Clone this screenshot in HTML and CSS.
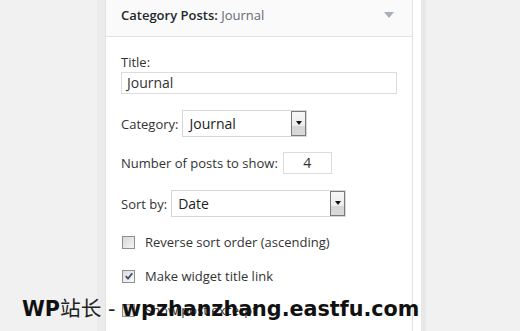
FILE: index.html
```html
<!DOCTYPE html>
<html>
<head>
<meta charset="utf-8">
<link rel="stylesheet" href="styles.css">
</head>
<body>
<div class="page">
  <div class="gutter-left"></div>
  <div class="widget">
    <div class="widget-top">
      <h3 class="widget-title">Category Posts: <span class="in-title">Journal</span></h3>
      <span class="toggle"></span>
    </div>
    <div class="widget-inside">
      <div class="field">
        <label class="lbl">Title:</label>
        <div class="text-input wide">Journal</div>
      </div>
      <div class="row row-cat">
        <label class="lbl">Category:</label>
        <div class="select sel-cat"><span class="sel-val">Journal</span><span class="sel-btn"><span class="tri"></span></span></div>
      </div>
      <div class="row row-num">
        <label class="lbl">Number of posts to show:</label>
        <div class="text-input num">4</div>
      </div>
      <div class="row row-sort">
        <label class="lbl">Sort by:</label>
        <div class="select sel-sort"><span class="sel-val">Date</span><span class="sel-btn"><span class="tri"></span></span></div>
      </div>
      <div class="check-row first">
        <span class="cb"></span><span class="lbl">Reverse sort order (ascending)</span>
      </div>
      <div class="check-row">
        <span class="cb checked"><svg viewBox="0 0 10 10" width="10" height="10"><path d="M1.8 5.2 L4 7.6 L8.3 2.2" fill="none" stroke="#3d4d78" stroke-width="1.8"/></svg></span><span class="lbl">Make widget title link</span>
      </div>
      <div class="check-row">
        <span class="cb"></span><span class="lbl">Show post excerpt</span>
      </div>
    </div>
  </div>
  <div class="gutter-right"></div>
</div>
<div class="watermark"><b>WP</b><span class="cjk">站长 - </span><b>wpzhanzhang.eastfu.com</b></div>
</body>
</html>
```
FILE: styles.css
```css
html, body {
  margin: 0;
  padding: 0;
}
body {
  width: 520px;
  height: 331px;
  overflow: hidden;
  background: #f1f1f1;
  font-family: "Open Sans", "Noto Sans", sans-serif;
  position: relative;
}
.page {
  display: flex;
  height: 331px;
  padding-left: 97px;
}
.gutter-left {
  width: 8px;
  background: #ebebeb;
}
.widget {
  width: 306px;
  background: #fff;
  border-left: 1px solid #e2e2e2;
  border-right: 1px solid #e2e2e2;
}
.gutter-right {
  width: 8px;
  background: #fff;
  border-right: 5px solid #e8e8e8;
}
.widget-top {
  height: 36px;
  background: #fafafa;
  border-bottom: 1px solid #e2e2e2;
  display: flex;
  align-items: center;
  justify-content: space-between;
  padding: 0 18px 0 15px;
}
.widget-title {
  margin: 0;
  font-size: 13px;
  font-weight: 600;
  color: #23282d;
  line-height: 20px;
  position: relative;
  top: -3px;
}
.in-title {
  font-weight: 400;
  color: #5f6b77;
}
.toggle {
  width: 0;
  height: 0;
  border-left: 5px solid transparent;
  border-right: 5px solid transparent;
  border-top: 6px solid #a8b0ba;
  position: relative;
  top: -3px;
}
.widget-inside {
  padding: 0 15px;
}
.lbl {
  font-size: 13px;
  color: #333;
  line-height: 18px;
}
.field {
  padding-top: 16px;
  display: flex;
  flex-direction: column;
  gap: 1px;
}
.text-input {
  box-sizing: border-box;
  height: 22px;
  border: 1px solid #dcdcdc;
  background: #fff;
  font-size: 14px;
  color: #333;
  line-height: 20px;
  padding: 0 5px;
}
.text-input.wide {
  width: 276px;
}
.text-input.num {
  width: 49px;
  text-align: center;
  margin-left: 5px;
}
.row {
  display: flex;
  align-items: center;
}
.row-cat { margin-top: 16px; }
.row-num { margin-top: 15px; }
.row-sort { margin-top: 16px; }
.select {
  box-sizing: border-box;
  height: 27px;
  border: 1px solid #d7d7d7;
  background: #fff;
  display: flex;
  align-items: stretch;
  justify-content: space-between;
  margin-left: 4px;
}
.sel-cat { width: 125px; }
.sel-sort { width: 175px; }
.sel-val {
  font-size: 14px;
  color: #222;
  line-height: 25px;
  padding-left: 6px;
}
.sel-btn {
  width: 15px;
  border: 1px solid #7a7a7a;
  background: linear-gradient(#f7f7f7 0%, #ececec 62%, #d6d6d6 63%, #d9d9d9 100%);
  display: flex;
  justify-content: center;
  padding-top: 9px;
  box-sizing: border-box;
}
.tri {
  width: 0;
  height: 0;
  border-left: 3.5px solid transparent;
  border-right: 3.5px solid transparent;
  border-top: 4px solid #111;
}
.check-row {
  display: flex;
  align-items: center;
  height: 18px;
  margin-top: 16px;
}
.check-row.first { margin-top: 16px; }
.cb {
  box-sizing: border-box;
  width: 13px;
  height: 13px;
  border: 1px solid #8e8f8f;
  background: linear-gradient(135deg, #d8d8d8, #f4f4f4);
  margin-left: 1px;
  margin-right: 10px;
  display: flex;
  align-items: center;
  justify-content: center;
}
.cb.checked {
  background: linear-gradient(135deg, #dcdcdc, #fafafa);
}
.watermark {
  position: absolute;
  left: 22px;
  top: 296px;
  font-family: "DejaVu Sans", sans-serif;
  font-size: 20.7px;
  line-height: 26px;
  color: #111;
  white-space: nowrap;
}
.watermark b {
  font-weight: 700;
}
.watermark .cjk {
  font-family: "DejaVu Sans", "Noto Sans CJK SC", sans-serif;
  font-weight: 400;
  color: #222;
}
```
